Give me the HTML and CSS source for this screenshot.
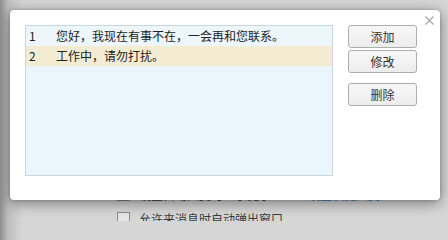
FILE: index.html
```html
<!DOCTYPE html>
<html lang="zh-CN">
<head>
<meta charset="utf-8">
<title>自动回复</title>
<link rel="stylesheet" href="styles.css">
</head>
<body>
<div class="backdrop">
  <div class="opt-row">
    <span class="check"></span>
    <span class="opt-text">设置自动回复时显示提示</span>
    <span class="opt-link">设置快捷回复</span>
  </div>
  <div class="opt-row">
    <span class="check"></span>
    <span class="opt-text">允许来消息时自动弹出窗口</span>
  </div>
</div>

<div class="dialog">
  <button class="close" aria-label="关闭">
    <svg width="9" height="9" viewBox="0 0 9 9"><path d="M0.5 0.5 L8.5 8.5 M8.5 0.5 L0.5 8.5" stroke="#a6a6a6" stroke-width="1.3" fill="none"/></svg>
  </button>
  <div class="body">
    <div class="list">
      <div class="row">
        <span class="num">1</span>
        <span class="txt">您好，我现在有事不在，一会再和您联系。</span>
      </div>
      <div class="row selected">
        <span class="num">2</span>
        <span class="txt">工作中，请勿打扰。</span>
      </div>
    </div>
    <div class="actions">
      <button class="btn">添加</button>
      <button class="btn">修改</button>
      <button class="btn btn-gap">删除</button>
    </div>
  </div>
</div>
</body>
</html>
```

FILE: styles.css
```css
html {
  margin: 0;
  padding: 0;
  height: 221px;
  overflow: hidden;
}
body {
  margin: 0;
  padding: 0;
  width: 448px;
  height: 221px;
  overflow: hidden;
  position: relative;
  font-family: "Noto Sans CJK SC", "Microsoft YaHei", "Noto Sans", sans-serif;
  font-size: 12px;
  color: #222;
  background:
    linear-gradient(to right, #8e8e8e 0px, #bdbdbd 8px, rgba(200,200,200,0) 22px),
    #d6d6d6;
}
.backdrop {
  padding-top: 182px;
  padding-left: 117px;
}
.opt-row {
  display: flex;
  align-items: center;
  gap: 9px;
  height: 24px;
  color: #3a3a3a;
}
.check {
  width: 11px;
  height: 11px;
  border: 1px solid #8a8a8a;
  background: #e6e6e6;
  flex: none;
}
.opt-link {
  color: #3f7fb8;
  margin-left: 28px;
}
.dialog {
  position: absolute;
  left: 10px;
  top: 10px;
  width: 430px;
  height: 190px;
  box-sizing: border-box;
  background: #ffffff;
  border-radius: 4px;
  box-shadow: 0 3px 14px rgba(0,0,0,0.45), 0 0 3px rgba(0,0,0,0.2);
  padding: 15px 0 0 15px;
}
.close {
  position: absolute;
  right: 6px;
  top: 5px;
  width: 10px;
  height: 10px;
  padding: 0;
  border: none;
  background: transparent;
  display: flex;
  align-items: center;
  justify-content: center;
}
.body {
  display: flex;
  gap: 15px;
}
.list {
  width: 308px;
  height: 151px;
  box-sizing: border-box;
  border: 1px solid #c7d8e2;
  background: #eaf5fc;
}
.row {
  display: flex;
  align-items: center;
  height: 20px;
  line-height: 20px;
  background: #edf6fb;
}
.row.selected {
  background: #f3ecd2;
}
.num {
  width: 30px;
  padding-left: 3px;
  box-sizing: border-box;
  flex: none;
}
.txt {
  white-space: nowrap;
}
.actions {
  display: flex;
  flex-direction: column;
  gap: 2px;
  width: 69px;
}
.btn {
  height: 23px;
  padding: 0;
  font-family: inherit;
  font-size: 12px;
  color: #333;
  background: linear-gradient(#f7f7f7, #ededed);
  border: 1px solid #adadad;
  border-radius: 3px;
}
.btn-gap {
  margin-top: 8px;
}
```
